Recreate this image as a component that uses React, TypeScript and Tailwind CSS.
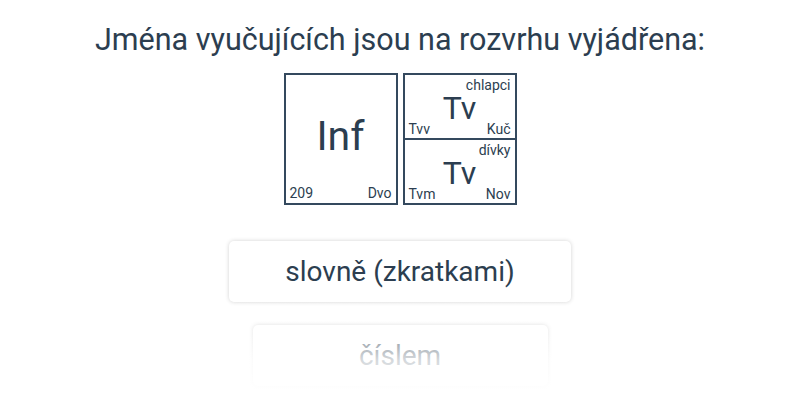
export default function App() {
  return (
    <div className="relative h-[400px] w-[800px] overflow-hidden bg-white text-[#2c3e50] [font-family:Roboto,'Noto_Sans',sans-serif]">
      <div className="flex flex-col items-center pt-[21px]">
        <h1 className="text-[30.5px] leading-[38px]">Jména vyučujících jsou na rozvrhu vyjádřena:</h1>

        <div className="mt-[14px] flex gap-[5px]">
          <div className="flex h-[132px] w-[114px] flex-col border-2 border-[#34495e] px-[4px] pb-[2px]">
            <div className="flex flex-1 items-center justify-center pt-[14px] text-[41px]">Inf</div>
            <div className="flex justify-between text-[14px] leading-[16px]">
              <span>209</span>
              <span>Dvo</span>
            </div>
          </div>
          <div className="flex h-[132px] w-[114px] flex-col border-2 border-[#34495e]">
            <Cell tag="chlapci" left="Tvv" right="Kuč" />
            <div className="h-[2px] bg-[#34495e]" />
            <Cell tag="dívky" left="Tvm" right="Nov" />
          </div>
        </div>

        <button className="mt-[36px] h-[61px] w-[342px] rounded-[5px] bg-white text-[28px] shadow-[0_0_4px_rgba(0,0,0,0.18)]">
          slovně (zkratkami)
        </button>
        <button className="mt-[23px] h-[61px] w-[295px] rounded-[5px] bg-white text-[28px] shadow-[0_0_4px_rgba(0,0,0,0.18)]">
          číslem
        </button>
      </div>
      <div className="pointer-events-none absolute inset-x-0 bottom-0 h-[100px] bg-gradient-to-b from-white/0 via-white/80 via-60% to-white" />
    </div>
  );
}

function Cell({ tag, left, right }: { tag: string; left: string; right: string }) {
  return (
    <div className="relative flex-1">
      <div className="absolute right-[4px] top-[2px] text-[14px] leading-[16px]">{tag}</div>
      <div className="absolute inset-x-0 top-[15px] text-center text-[32px] leading-[36px]">Tv</div>
      <div className="absolute inset-x-[4px] bottom-[1px] flex justify-between text-[14px] leading-[16px]">
        <span>{left}</span>
        <span>{right}</span>
      </div>
    </div>
  );
}
